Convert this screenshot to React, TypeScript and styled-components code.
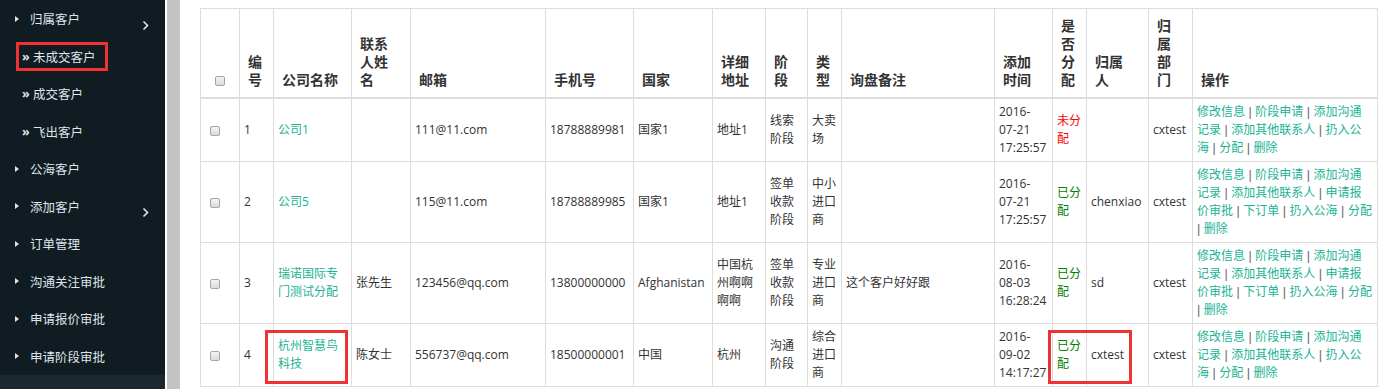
import React from "react";
import styled, { createGlobalStyle } from "styled-components";

const GlobalStyle = createGlobalStyle`
  html, body {
    margin: 0;
    padding: 0;
    background: #fff;
  }
  body {
    font-family: "Open Sans", "Noto Sans CJK SC", sans-serif;
    color: #333;
  }
`;

const Page = styled.div`
  display: flex;
  height: 389px;
  overflow: hidden;
`;

const Sidebar = styled.nav`
  width: 165px;
  flex-shrink: 0;
  background: #111b22;
  display: flex;
  flex-direction: column;
`;

const NavItem = styled.div<{ $sub?: boolean; $marked?: boolean }>`
  position: relative;
  height: 37.5px;
  flex-shrink: 0;
  display: flex;
  align-items: center;
  padding-left: ${(p) => (p.$sub ? 22 : 15)}px;
  color: #dfe5ea;
  font-size: 12.5px;
  ${(p) =>
    p.$marked &&
    `
    &::after {
      content: "";
      position: absolute;
      left: 16px;
      top: 4.5px;
      width: 92px;
      height: 29px;
      box-sizing: border-box;
      border: 3px solid #ee3333;
    }
  `}
`;

const Caret = styled.span`
  width: 0;
  height: 0;
  border-left: 4px solid #dfe5ea;
  border-top: 3.5px solid transparent;
  border-bottom: 3.5px solid transparent;
  margin-right: 11px;
`;

const Quote = styled.span`
  width: 11px;
  font-weight: bold;
`;

const Chevron = styled.svg`
  margin-left: auto;
  margin-right: 16px;
  margin-top: 13px;
`;

const SideFooter = styled.div`
  flex: 1;
  background: #1b2731;
`;

const Gutter = styled.div`
  width: 13px;
  flex-shrink: 0;
  margin-left: 2px;
  background: #c3c3c3;
`;

const Main = styled.main`
  flex: 1;
  padding: 8px 0 0 20px;
`;

const TableWrap = styled.div`
  position: relative;
  width: 1177px;
`;

const Grid = styled.table`
  width: 1177px;
  table-layout: fixed;
  border-collapse: collapse;
  border: 1px solid #ddd;
  font-size: 12px;
  line-height: 18px;
`;

const Th = styled.th<{ $center?: boolean }>`
  padding: 8px;
  vertical-align: bottom;
  text-align: ${(p) => (p.$center ? "center" : "left")};
  font-size: 14px;
  font-weight: bold;
  color: #333;
  border: 1px solid #ddd;
  border-bottom: 2px solid #ddd;
`;

const Td = styled.td`
  padding: 4px;
  vertical-align: middle;
  color: #333;
  border: 1px solid #ddd;
`;

const Line = styled.span`
  display: block;
`;

const Check = styled.input.attrs({ type: "checkbox" })`
  appearance: none;
  width: 10px;
  height: 10px;
  margin: 0 0 0 5px;
  border: 1px solid #a6a6a6;
  border-radius: 2px;
  background: linear-gradient(#f4f4f4, #dadada);
  vertical-align: middle;
  box-sizing: border-box;
`;

const HeadCheck = styled(Check)`
  margin: 0;
`;

const Link = styled.a`
  color: #1ab394;
  text-decoration: none;
`;

const Sep = styled.span`
  font-family: "Liberation Sans", sans-serif;
  font-size: 12.6px;
  color: #666;
`;

const Status = styled.span<{ $done: boolean }>`
  color: ${(p) => (p.$done ? "#008000" : "#ff0000")};
`;

const Mark = styled.div<{ $x: number; $y: number; $w: number; $h: number }>`
  position: absolute;
  left: ${(p) => p.$x}px;
  top: ${(p) => p.$y}px;
  width: ${(p) => p.$w}px;
  height: ${(p) => p.$h}px;
  box-sizing: border-box;
  border: 3px solid #ee3333;
  pointer-events: none;
`;

const ChevronIcon = () => (
  <Chevron width="7" height="11" viewBox="0 0 7 11">
    <polyline points="1.5,1.5 5.5,5.5 1.5,9.5" fill="none" stroke="#dfe5ea" strokeWidth="1.6" />
  </Chevron>
);

const nav = [
  { label: "归属客户", chevron: true },
  { label: "未成交客户", sub: true, marked: true },
  { label: "成交客户", sub: true },
  { label: "飞出客户", sub: true },
  { label: "公海客户" },
  { label: "添加客户", chevron: true },
  { label: "订单管理" },
  { label: "沟通关注审批" },
  { label: "申请报价审批" },
  { label: "申请阶段审批" },
];

const widths = [39, 34, 78, 59, 135, 88, 79, 53, 42, 34, 153, 58, 34, 62, 44, 185];

const heads: string[][] = [
  [],
  ["编", "号"],
  ["公司名称"],
  ["联系", "人姓", "名"],
  ["邮箱"],
  ["手机号"],
  ["国家"],
  ["详细", "地址"],
  ["阶", "段"],
  ["类", "型"],
  ["询盘备注"],
  ["添加", "时间"],
  ["是", "否", "分", "配"],
  ["归属", "人"],
  ["归", "属", "部", "门"],
  ["操作"],
];

const shortActions = ["修改信息", "阶段申请", "添加沟通记录", "添加其他联系人", "扔入公海", "分配", "删除"];
const longActions = [
  "修改信息",
  "阶段申请",
  "添加沟通记录",
  "添加其他联系人",
  "申请报价审批",
  "下订单",
  "扔入公海",
  "分配",
  "删除",
];

const rows = [
  {
    id: 1,
    company: "公司1",
    contact: "",
    email: "111@11.com",
    phone: "18788889981",
    country: "国家1",
    addr: "地址1",
    stage: "线索阶段",
    kind: "大卖场",
    note: "",
    date: ["2016-", "07-21", "17:25:57"],
    done: false,
    owner: "",
    dept: "cxtest",
    actions: shortActions,
  },
  {
    id: 2,
    company: "公司5",
    contact: "",
    email: "115@11.com",
    phone: "18788889985",
    country: "国家1",
    addr: "地址1",
    stage: "签单收款阶段",
    kind: "中小进口商",
    note: "",
    date: ["2016-", "07-21", "17:25:57"],
    done: true,
    owner: "chenxiao",
    dept: "cxtest",
    actions: longActions,
  },
  {
    id: 3,
    company: "瑞诺国际专门测试分配",
    contact: "张先生",
    email: "123456@qq.com",
    phone: "13800000000",
    country: "Afghanistan",
    addr: "中国杭州啊啊啊啊",
    stage: "签单收款阶段",
    kind: "专业进口商",
    note: "这个客户好好跟",
    date: ["2016-", "08-03", "16:28:24"],
    done: true,
    owner: "sd",
    dept: "cxtest",
    actions: longActions,
  },
  {
    id: 4,
    company: "杭州智慧鸟科技",
    contact: "陈女士",
    email: "556737@qq.com",
    phone: "18500000001",
    country: "中国",
    addr: "杭州",
    stage: "沟通阶段",
    kind: "综合进口商",
    note: "",
    date: ["2016-", "09-02", "14:17:27"],
    done: true,
    owner: "cxtest",
    dept: "cxtest",
    actions: shortActions,
  },
];

export default function App() {
  return (
    <>
      <GlobalStyle />
      <Page>
        <Sidebar>
          {nav.map((item) => (
            <NavItem key={item.label} $sub={item.sub} $marked={item.marked}>
              {item.sub ? <Quote>»</Quote> : <Caret />}
              {item.label}
              {item.chevron && <ChevronIcon />}
            </NavItem>
          ))}
          <SideFooter />
        </Sidebar>
        <Gutter />
        <Main>
          <TableWrap>
            <Grid>
              <colgroup>
                {widths.map((w, i) => (
                  <col key={i} style={{ width: w }} />
                ))}
              </colgroup>
              <thead>
                <tr>
                  {heads.map((lines, i) =>
                    i === 0 ? (
                      <Th key={i} $center>
                        <HeadCheck />
                      </Th>
                    ) : (
                      <Th key={i}>
                        {lines.map((l) => (
                          <Line key={l}>{l}</Line>
                        ))}
                      </Th>
                    )
                  )}
                </tr>
              </thead>
              <tbody>
                {rows.map((r) => (
                  <tr key={r.id}>
                    <Td>
                      <Check />
                    </Td>
                    <Td>{r.id}</Td>
                    <Td>
                      <Link href="#">{r.company}</Link>
                    </Td>
                    <Td>{r.contact}</Td>
                    <Td>{r.email}</Td>
                    <Td>{r.phone}</Td>
                    <Td>{r.country}</Td>
                    <Td>{r.addr}</Td>
                    <Td>{r.stage}</Td>
                    <Td>{r.kind}</Td>
                    <Td>{r.note}</Td>
                    <Td>
                      {r.date.map((d) => (
                        <Line key={d}>{d}</Line>
                      ))}
                    </Td>
                    <Td>
                      <Status $done={r.done}>{r.done ? "已分配" : "未分配"}</Status>
                    </Td>
                    <Td>{r.owner}</Td>
                    <Td>{r.dept}</Td>
                    <Td>
                      {r.actions.map((a, i) => (
                        <React.Fragment key={a}>
                          {i > 0 && <Sep> | </Sep>}
                          <Link href="#">{a}</Link>
                        </React.Fragment>
                      ))}
                    </Td>
                  </tr>
                ))}
              </tbody>
            </Grid>
            <Mark $x={65} $y={322} $w={83} $h={54} />
            <Mark $x={848} $y={322} $w={84} $h={54} />
          </TableWrap>
        </Main>
      </Page>
    </>
  );
}
